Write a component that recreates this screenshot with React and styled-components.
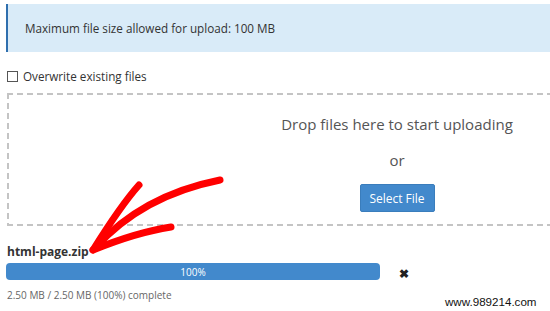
import React from "react";
import styled, { createGlobalStyle } from "styled-components";

const Global = createGlobalStyle`
  html, body { margin: 0; padding: 0; background: #fff; overflow: hidden; }
  body { font-family: "Open Sans", "Noto Sans", sans-serif; color: #333; }
`;

const Page = styled.div`
  position: relative;
  width: 787px;
  height: 311px;
  padding: 4px 0 0 6px;
  box-sizing: border-box;
`;

const Alert = styled.div`
  height: 48px;
  box-sizing: border-box;
  border-left: 2px solid #2f6fae;
  background: #d9ebf8;
  padding-left: 17px;
  display: flex;
  align-items: center;
  font-size: 11.7px;
  color: #333;
`;

const CheckRow = styled.label`
  display: flex;
  align-items: center;
  gap: 5px;
  margin: 15px 0 0 1px;
  font-size: 11.7px;
  color: #333;
  height: 18px;
`;

const Box = styled.span`
  width: 9px;
  height: 9px;
  border: 1px solid #555;
  background: #fff;
`;

const dash = (dir) =>
  `repeating-linear-gradient(${dir}, #c4c4c4 0 6px, transparent 6px 10px)`;

const DropZone = styled.div`
  margin: 8px 0 0 1px;
  height: 133px;
  box-sizing: border-box;
  background-image: ${dash("to right")}, ${dash("to right")}, ${dash("to bottom")};
  background-size: 100% 2px, 100% 2px, 2px 100%;
  background-position: 0 0, 0 100%, 0 0;
  background-repeat: no-repeat;
  display: flex;
  flex-direction: column;
  align-items: center;
  padding-top: 20px;
`;

const DropText = styled.div`
  font-size: 15px;
  color: #555;
  line-height: 22px;
`;

const OrText = styled.div`
  font-size: 15px;
  color: #555;
  line-height: 22px;
  margin-top: 14px;
`;

const Button = styled.button`
  margin-top: 13px;
  width: 75px;
  height: 28px;
  border: 1px solid #3a7dbc;
  border-radius: 2px;
  background: #4289cc;
  color: #fff;
  font-family: inherit;
  font-size: 12px;
  padding: 0;
`;

const FileName = styled.div`
  margin-top: 17px;
  font-size: 12px;
  font-weight: 700;
  color: #333;
  line-height: 18px;
  padding-left: 1px;
`;

const ProgressRow = styled.div`
  display: flex;
  align-items: center;
  margin-top: 2px;
  height: 17px;
`;

const Bar = styled.div`
  width: 374px;
  height: 17px;
  border-radius: 4px;
  background: #4289cc;
  display: flex;
  align-items: center;
  justify-content: center;
  color: #fff;
  font-size: 10px;
`;

const Close = styled.span`
  margin-left: 19px;
  font-size: 12px;
  font-weight: 700;
  color: #222;
  margin-top: 3px;
`;

const Status = styled.div`
  margin-top: 8px;
  font-size: 10px;
  color: #666;
  padding-left: 1px;
`;

const Watermark = styled.div`
  position: absolute;
  left: 445px;
  top: 295px;
  font-family: "Liberation Sans", Arial, sans-serif;
  font-size: 11.6px;
  color: #111;
`;

const Arrow = styled.svg`
  position: absolute;
  left: 0;
  top: 0;
  pointer-events: none;
`;

export default function App() {
  return (
    <>
      <Global />
      <Page>
        <Alert>Maximum file size allowed for upload: 100 MB</Alert>
        <CheckRow>
          <Box />
          Overwrite existing files
        </CheckRow>
        <DropZone>
          <DropText>Drop files here to start uploading</DropText>
          <OrText>or</OrText>
          <Button>Select File</Button>
        </DropZone>
        <FileName>html-page.zip</FileName>
        <ProgressRow>
          <Bar>100%</Bar>
          <Close>✖</Close>
        </ProgressRow>
        <Status>2.50 MB / 2.50 MB (100%) complete</Status>
        <Watermark>www.989214.com</Watermark>
        <Arrow width="550" height="311" viewBox="0 0 550 311">
          <g fill="none" stroke="#f00" strokeLinecap="round" strokeLinejoin="round" strokeWidth="7">
            <path d="M93 250 C 108 226, 122 204, 139 185" />
            <path d="M95 248 C 120 220, 160 192, 220 180" />
            <path d="M93 250 C 120 239, 145 231, 171 227" />
          </g>
        </Arrow>
      </Page>
    </>
  );
}
